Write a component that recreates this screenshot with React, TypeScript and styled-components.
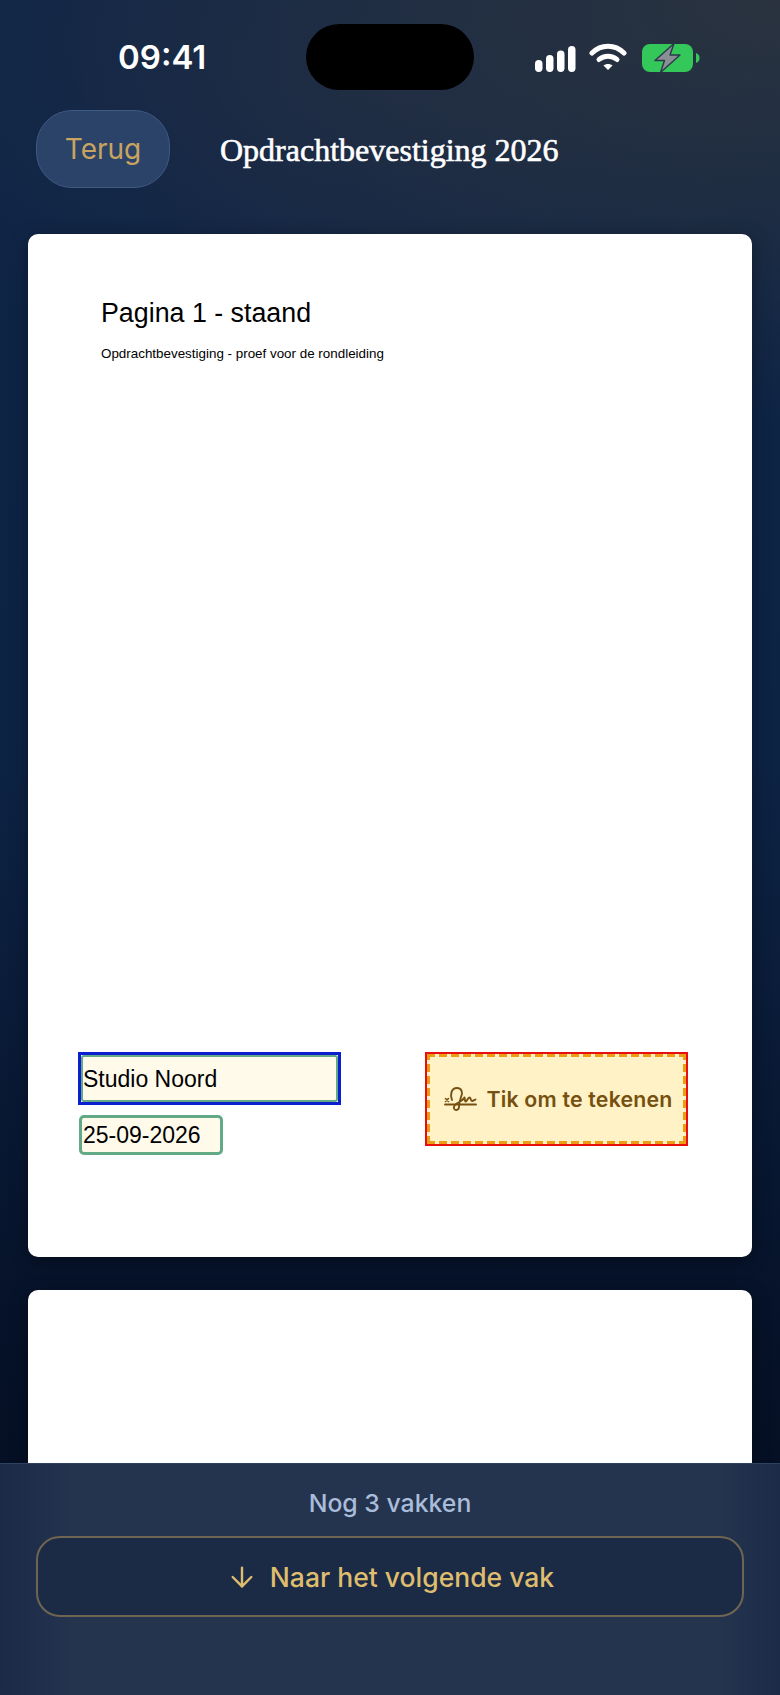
import React from 'react';
import styled, { createGlobalStyle } from 'styled-components';
import { ArrowDown } from 'lucide-react';

const Global = createGlobalStyle`
  html, body { margin: 0; padding: 0; background: #0b1c38; }
  #root { width: 780px; height: 1695px; }
`;

const Screen = styled.div`
  position: relative;
  width: 780px;
  height: 1695px;
  overflow: hidden;
  display: flex;
  flex-direction: column;
  font-family: Inter, "Liberation Sans", sans-serif;
  background:
    radial-gradient(ellipse 760px 420px at 780px 0px, rgba(44, 52, 62, 0.9), rgba(44, 52, 62, 0) 100%),
    radial-gradient(ellipse 620px 300px at 400px 80px, rgba(34, 46, 70, 0.55), rgba(34, 46, 70, 0) 100%),
    linear-gradient(180deg, #0f2547 0%, #0d2344 45%, #061229 78%, #040c1d 100%);
`;

const StatusBar = styled.div`
  height: 110px;
  flex: none;
  display: grid;
  grid-template-columns: 306px 168px 1fr;
`;

const Clock = styled.div`
  padding: 38px 0 0 118px;
  font-size: 33px;
  line-height: 39px;
  font-weight: 600;
  color: #fff;
`;

const Island = styled.div`
  margin-top: 24px;
  height: 66px;
  border-radius: 33px;
  background: #000;
`;

const StatusIcons = styled.div`
  display: flex;
  align-items: flex-start;
  gap: 13px;
  padding: 43px 0 0 61px;
`;

const SignalWrap = styled.span`
  display: block;
  padding-top: 3px;
`;

const BatteryWrap = styled.span`
  display: block;
  margin-left: 2px;
`;

const Header = styled.div`
  flex: none;
  display: flex;
  align-items: center;
  gap: 50px;
  padding-left: 36px;
  height: 77px;
`;

const BackButton = styled.div`
  width: 134px;
  height: 78px;
  box-sizing: border-box;
  display: flex;
  align-items: center;
  justify-content: center;
  border-radius: 36px;
  background: #2b4269;
  border: 1px solid #3f5a84;
  color: #c8a45f;
  font-size: 28px;
`;

const Title = styled.div`
  padding-top: 3px;
  font-family: "Liberation Serif", serif;
  font-size: 32px;
  font-weight: 400;
  -webkit-text-stroke: 0.6px #fff;
  color: #fff;
`;

const Pages = styled.div`
  flex: none;
  display: flex;
  flex-direction: column;
  gap: 33px;
  padding: 47px 28px 0;
`;

const Sheet = styled.div<{ $height: number }>`
  position: relative;
  height: ${(p) => p.$height}px;
  border-radius: 10px;
  background: #fff;
  box-shadow: 0 4px 18px rgba(0, 0, 0, 0.35);
  font-family: "Liberation Sans", Arial, sans-serif;
  color: #000;
`;

const SheetText = styled.div`
  padding: 63px 0 0 73px;
`;

const SheetHeading = styled.div`
  font-size: 26.8px;
  line-height: 32px;
`;

const SheetSub = styled.div`
  margin-top: 17px;
  font-size: 13.4px;
  line-height: 16px;
`;

const FieldSlot = styled.div<{ $x: number; $y: number; $w: number; $h: number; $focus?: boolean }>`
  position: absolute;
  left: ${(p) => p.$x}px;
  top: ${(p) => p.$y}px;
  width: ${(p) => p.$w}px;
  height: ${(p) => p.$h}px;
  box-sizing: border-box;
  border: ${(p) => (p.$focus ? '3px solid #0a1fd0' : '0')};
`;

const FieldBody = styled.div<{ $thin?: boolean }>`
  height: 100%;
  box-sizing: border-box;
  display: flex;
  align-items: center;
  padding: ${(p) => (p.$thin ? '1px 0 0 0' : '0 0 0 1px')};
  font-size: 23px;
  background: #fffaea;
  border: ${(p) => (p.$thin ? '2px' : '3px')} solid #62a985;
  border-radius: ${(p) => (p.$thin ? '3px' : '5px')};
`;

const SignField = styled.div`
  position: absolute;
  left: 397px;
  top: 818px;
  width: 263px;
  height: 94px;
  box-sizing: border-box;
  border: 2px solid #e8100e;
`;

const SignInner = styled.div`
  height: 100%;
  box-sizing: border-box;
  display: flex;
  align-items: center;
  justify-content: center;
  gap: 9px;
  padding-left: 4px;
  background:
    repeating-linear-gradient(90deg, #ee9c14 0 8px, transparent 8px 12px) top / 100% 3px no-repeat,
    repeating-linear-gradient(90deg, #ee9c14 0 8px, transparent 8px 12px) bottom / 100% 3px no-repeat,
    repeating-linear-gradient(0deg, #ee9c14 0 8px, transparent 8px 12px) left / 3px 100% no-repeat,
    repeating-linear-gradient(0deg, #ee9c14 0 8px, transparent 8px 12px) right / 3px 100% no-repeat,
    #fff2c6;
  color: #765010;
  font-family: Inter, "Liberation Sans", sans-serif;
  font-size: 21.3px;
  font-weight: 600;
  letter-spacing: 0.2px;
`;

const Footer = styled.div`
  position: absolute;
  left: 0;
  right: 0;
  bottom: 0;
  height: 232px;
  box-sizing: border-box;
  border-top: 1px solid #2f415f;
  background: linear-gradient(90deg, #1a2a47 0%, #24344f 9%, #24344f 92%, #1c2c48 100%);
  padding: 24px 36px 0;
  display: flex;
  flex-direction: column;
  align-items: stretch;
`;

const Remaining = styled.div`
  text-align: center;
  color: #a9bcda;
  font-size: 24.8px;
  line-height: 30px;
  font-weight: 500;
`;

const NextButton = styled.div`
  margin-top: 18px;
  height: 81px;
  box-sizing: border-box;
  display: flex;
  align-items: center;
  justify-content: center;
  gap: 12px;
  border-radius: 24px;
  background: #1b2a45;
  border: 2px solid #6f6552;
  color: #dfbd6f;
  font-size: 26.5px;
  font-weight: 500;
`;

const SignalIcon = () => (
  <svg width="41" height="26" viewBox="0 0 41 26" fill="#fff" style={{ display: 'block' }}>
    <rect x="0" y="14" width="7.5" height="12" rx="3.7" />
    <rect x="11" y="9" width="7.5" height="17" rx="3.7" />
    <rect x="22" y="4.5" width="7.5" height="21.5" rx="3.7" />
    <rect x="33" y="0" width="7.5" height="26" rx="3.7" />
  </svg>
);

const WifiIcon = () => (
  <svg width="38" height="29" viewBox="0 0 38 29" fill="none" stroke="#fff" strokeWidth="5" strokeLinecap="round" style={{ display: 'block' }}>
    <path d="M3 10 C12 1 26 1 35 10" />
    <path d="M10 16.5 C15 12 23 12 28 16.5" />
    <path d="M19 27 L14.5 22.5 C17 20.5 21 20.5 23.5 22.5 Z" fill="#fff" stroke="none" />
  </svg>
);

const BatteryIcon = () => (
  <svg width="58" height="30" viewBox="0 0 58 30" style={{ display: 'block' }}>
    <rect x="0" y="1" width="51" height="28" rx="8" fill="#34c759" />
    <path d="M54 10 C57 11 57.5 13 57.5 15 C57.5 17 57 19 54 20 Z" fill="#34c759" />
    <path d="M32 0.5 L13 17.5 H22.5 L18.5 29.5 L38 12 H28 Z" fill="#8a8f96" stroke="#2a3a4a" strokeWidth="1.4" strokeLinejoin="round" />
  </svg>
);

const SignatureIcon = () => (
  <svg width="33" height="25" viewBox="0 0 33 25" fill="none" stroke="currentColor" strokeWidth="1.9" strokeLinecap="round" strokeLinejoin="round" style={{ flex: 'none' }}>
    <path d="M1 17.5 H32" />
    <path d="M1.5 11.5 L4.5 14.5 M4.5 11.5 L1.5 14.5" strokeWidth="1.6" />
    <path d="M8 13 C6 8 7 1 13 1 C18 1 19 6 17 10 C15.5 14 15 18 15 20 C15 23 11 24 10 21.5 C9 19 13 16 17 14 C19 13 20 11 20.5 10.5 C21 13 21 15 22 14.5 C23 14 24 10.5 25.5 10.5 C27 10.5 26.5 14 28 14 C29 14 30.5 13 31.5 12.5" />
  </svg>
);

export default function App() {
  return (
    <Screen>
      <Global />
      <StatusBar>
        <Clock>09:41</Clock>
        <Island />
        <StatusIcons>
          <SignalWrap><SignalIcon /></SignalWrap>
          <WifiIcon />
          <BatteryWrap><BatteryIcon /></BatteryWrap>
        </StatusIcons>
      </StatusBar>
      <Header>
        <BackButton>Terug</BackButton>
        <Title>Opdrachtbevestiging 2026</Title>
      </Header>
      <Pages>
        <Sheet $height={1023}>
          <SheetText>
            <SheetHeading>Pagina 1 - staand</SheetHeading>
            <SheetSub>Opdrachtbevestiging - proef voor de rondleiding</SheetSub>
          </SheetText>
          <FieldSlot $x={50} $y={818} $w={263} $h={53} $focus>
            <FieldBody $thin>Studio Noord</FieldBody>
          </FieldSlot>
          <FieldSlot $x={51} $y={881} $w={144} $h={40}>
            <FieldBody>25-09-2026</FieldBody>
          </FieldSlot>
          <SignField>
            <SignInner>
              <SignatureIcon />
              Tik om te tekenen
            </SignInner>
          </SignField>
        </Sheet>
        <Sheet $height={400} />
      </Pages>
      <Footer>
        <Remaining>Nog 3 vakken</Remaining>
        <NextButton>
          <ArrowDown size={32} strokeWidth={1.8} />
          Naar het volgende vak
        </NextButton>
      </Footer>
    </Screen>
  );
}
